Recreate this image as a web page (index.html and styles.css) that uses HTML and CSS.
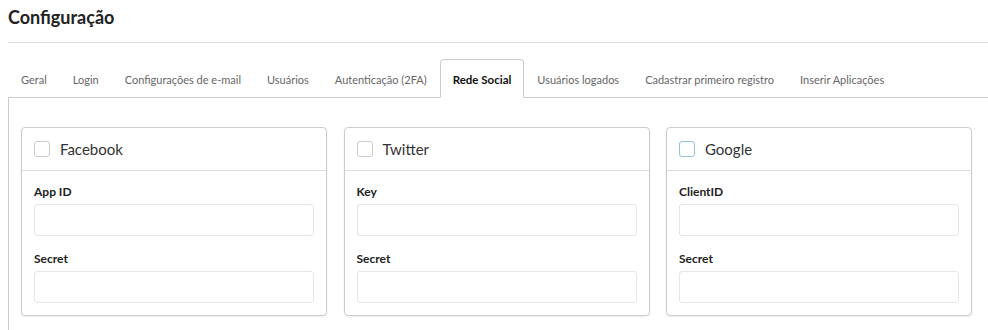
FILE: index.html
```html
<!DOCTYPE html>
<html>
<head>
	<meta charset="utf-8">
	<title>Configuração</title>
	<link rel="stylesheet" href="styles.css">
</head>
<body>
	<h1 class="page_title">Configuração</h1>
	<ul class="tabs">
		<li>Geral</li>
		<li>Login</li>
		<li>Configurações de e-mail</li>
		<li>Usuários</li>
		<li>Autenticação (2FA)</li>
		<li class="active">Rede Social</li>
		<li>Usuários logados</li>
		<li>Cadastrar primeiro registro</li>
		<li>Inserir Aplicações</li>
	</ul>
	<div class="tab_pane">
		<div class="social_box">
			<div class="box_head">
				<span class="check"></span> Facebook
			</div>
			<div class="box_body">
				<label>App ID</label>
				<input type="text">
				<label>Secret</label>
				<input type="text">
			</div>
		</div>
		<div class="social_box">
			<div class="box_head">
				<span class="check"></span> Twitter
			</div>
			<div class="box_body">
				<label>Key</label>
				<input type="text">
				<label>Secret</label>
				<input type="text">
			</div>
		</div>
		<div class="social_box">
			<div class="box_head">
				<span class="check focus"></span> Google
			</div>
			<div class="box_body">
				<label>ClientID</label>
				<input type="text">
				<label>Secret</label>
				<input type="text">
			</div>
		</div>
	</div>
</body>
</html>
```

FILE: styles.css
```css
html, body {
	overflow: hidden;
}
body {
	margin: 0 0 0 8px;
	font-family: Lato, "Open Sans", sans-serif;
	color: #333;
	background: #fff;
}
.page_title {
	font-size: 18px;
	font-weight: bold;
	color: #222;
	margin: 0;
	padding: 6px 0 0 0;
	height: 36px;
	border-bottom: 1px solid #ddd;
}
.tabs {
	list-style: none;
	margin: 16px 0 0 0;
	padding: 0;
	display: flex;
	border-bottom: 1px solid #ccc;
	width: 1000px;
}
.tabs li {
	font-size: 11px;
	color: #666;
	padding: 0 12px;
	height: 38px;
	line-height: 40px;
	margin-bottom: -1px;
	border: 1px solid transparent;
	border-bottom: none;
	white-space: nowrap;
}
.tabs li:first-child {
	border-left: none;
	padding-left: 13px;
}
.tabs li.active {
	color: #111;
	font-size: 11.5px;
	font-weight: bold;
	background: #fff;
	border: 1px solid #ccc;
	border-bottom: 1px solid #fff;
	border-radius: 4px 4px 0 0;
	padding: 0 12px;
	height: 37px;
}
.tab_pane {
	border-left: 1px solid #ccc;
	padding: 29px 0 0 12px;
	display: grid;
	grid-template-columns: 306px 306px 306px;
	column-gap: 16.5px;
	height: 203px;
	align-items: start;
}
.social_box {
	border: 1px solid #ccc;
	border-radius: 4px;
	box-shadow: 0 1px 2px rgba(0, 0, 0, 0.08);
}
.box_head {
	height: 42px;
	display: flex;
	align-items: center;
	padding: 0 12px;
	font-size: 15px;
	color: #333;
	border-bottom: 1px solid #ddd;
}
.check {
	width: 14px;
	height: 14px;
	border: 1px solid #ccc;
	border-radius: 3px;
	margin-right: 10px;
	display: inline-block;
}
.check.focus {
	border-color: #8fc3da;
}
.box_body {
	padding: 12px 12px 12px 12px;
}
.box_body label {
	display: block;
	font-size: 12px;
	font-weight: bold;
	color: #222;
	line-height: 17px;
	margin-bottom: 4px;
}
.box_body input {
	display: block;
	box-sizing: border-box;
	width: 100%;
	height: 32px;
	border: 1px solid #e6e6e6;
	border-radius: 3px;
	margin: 0 0 14px 0;
	outline: none;
}
.box_body input:last-child {
	margin-bottom: 0;
}
```
